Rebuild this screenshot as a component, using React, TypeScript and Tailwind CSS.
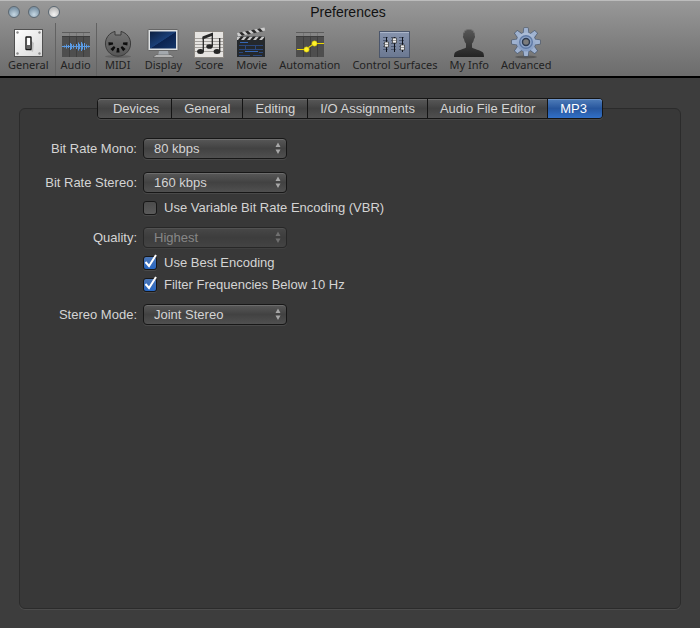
import { useState, type ReactNode } from "react"

function SwitchIcon() {
  return (
    <svg width="32" height="32" viewBox="0 0 32 32" aria-hidden="true">
      <defs>
        <linearGradient id="plate" x1="0" y1="0" x2="1" y2="1">
          <stop offset="0" stopColor="#fff" />
          <stop offset="1" stopColor="#d8d8d8" />
        </linearGradient>
      </defs>
      <rect x="2.5" y="2.5" width="28" height="27" fill="url(#plate)" stroke="#505050" />
      {[5.5, 27.5].map((x) => [5.5, 26.5].map((y) => <circle key={`${x}-${y}`} cx={x} cy={y} r="1.2" fill="#888" />))}
      <path d="M17 12 22 16 21 25 15 22z" fill="#aaa" opacity="0.6" />
      <rect x="14" y="10" width="5" height="12.5" rx="0.5" fill="#eee" stroke="#151515" strokeWidth="1.4" />
      <rect x="15.5" y="11" width="2.5" height="7" fill="#fff" />
      <rect x="15" y="18" width="3" height="4" fill="#666" />
    </svg>
  )
}

function TrackBackdrop() {
  return (
    <>
      <rect x="2" y="5" width="28" height="25" fill="#4e4e4e" />
      <path d="M9.5 10v20M16.5 10v20M23.5 10v20" stroke="#3e3e3e" />
      <rect x="2" y="5" width="28" height="4" fill="#868686" />
      <path d="M9.5 6v3M16.5 6v3M23.5 6v3" stroke="#757575" />
      <path d="M2 5.5h28" stroke="#5c5c5c" />
      <path d="M2 9.5h28" stroke="#3c3c3c" />
    </>
  )
}

function AudioIcon() {
  return (
    <svg width="32" height="32" viewBox="0 0 32 32" aria-hidden="true">
      <TrackBackdrop />
      <path
        d="M2 19.5h28M4.5 18.500v2M6.500 17.500v4M8.500 18v3M10.500 16v7M11.500 17v5M13.500 17.500v4M16.500 17v5M18.500 15.500v8M19.500 17v5M21.500 15v9M22.500 16.500v6M24.500 16v7M26.500 17.500v4M28.500 18.500v2"
        stroke="#5b9be4"
      />
    </svg>
  )
}

function MidiIcon() {
  return (
    <svg width="32" height="32" viewBox="0 0 32 32" aria-hidden="true">
      <defs>
        <linearGradient id="midi" x1="0" y1="0" x2="0" y2="1">
          <stop offset="0" stopColor="#747474" />
          <stop offset="1" stopColor="#565656" />
        </linearGradient>
      </defs>
      <ellipse cx="16" cy="29.5" rx="13" ry="1.5" fill="#444" opacity="0.4" />
      <path d="M13 4.400V8h6V4.400A12.600 12.600 0 1 1 13 4.400z" fill="url(#midi)" stroke="#3b3b3b" />
      <g fill="#0d0d0d">
        {[-85, -42, 0, 42, 85].map((angle) => (
          <path key={angle} d="M14.400 25.500h3.200l-.6-4.500h-2z" transform={`rotate(${angle} 16 16)`} />
        ))}
      </g>
    </svg>
  )
}

function DisplayIcon() {
  return (
    <svg width="32" height="32" viewBox="0 0 32 32" aria-hidden="true">
      <defs>
        <linearGradient id="screen" x1="0" y1="0" x2="1" y2="1">
          <stop offset="0" stopColor="#0c2041" />
          <stop offset="0.5" stopColor="#1a3f78" />
          <stop offset="0.52" stopColor="#0b2350" />
          <stop offset="1" stopColor="#153669" />
        </linearGradient>
      </defs>
      <path d="M12 24h9l1 5H11z" fill="#a3a8ad" />
      <path d="M9 28h15l3 2H6z" fill="#dadada" stroke="#555" strokeWidth="0.600" />
      <rect x="1" y="2.500" width="30" height="21" rx="0.500" fill="#dfe2e4" stroke="#666" />
      <rect x="3" y="4.500" width="26" height="17" fill="url(#screen)" />
    </svg>
  )
}

function ScoreIcon() {
  return (
    <svg width="32" height="32" viewBox="0 0 32 32" aria-hidden="true">
      <rect x="1.500" y="4.500" width="29" height="26" fill="#e6e4e1" stroke="#8c8883" />
      <path d="M2 11.500h28M2 14.500h28M2 17.500h28M2 20.500h28M2 24.500h28" stroke="#a3a09c" />
      <g fill="#262626">
        <ellipse cx="7.500" cy="24.500" rx="3.400" ry="2.500" />
        <ellipse cx="16.500" cy="19.500" rx="3.200" ry="2.300" />
        <ellipse cx="24" cy="24.500" rx="3.400" ry="2.500" />
        <path d="M9.500 9.500 20 5.500v3l-10.500 4z" />
      </g>
      <path d="M10.300 24.500V10M19.300 19.500V6M26.700 24.500V11" stroke="#262626" strokeWidth="1.300" />
    </svg>
  )
}

function MovieIcon() {
  return (
    <svg width="32" height="32" viewBox="0 0 32 32" aria-hidden="true">
      <rect x="1" y="9" width="28" height="21" fill="#24282c" />
      <path d="M1 9.500h28V13H1z" fill="#c8c8c8" />
      <path d="M2 13l3-3.500h3L5 13zM8 13l3-3.500h3L11 13zM14 13l3-3.500h3L17 13zM20 13l3-3.500h3L23 13zM26 13l3-3.500V13z" fill="#222" />
      <path d="M1 6 28.500.5l.7 3L2 9.500z" fill="#ccc" />
      <path d="M3 5.600l3 3.100 3-.7-3-3.100zM9 4.400l3 3.100 3-.7-3-3.100zM15 3.200l3 3.100 3-.7-3-3.100zM21 2l3 3.100 3-.7-3-3.100z" fill="#2a2a2a" />
      <path d="M3 18.500h24M9.500 19v3M19.500 19v3M3 22.500h24M3 25.500h4M23 25.500h4M3 28.500h11M17 28.500h9" stroke="#2a477c" />
      <path d="M4 15.500h8M9 24.500h13" stroke="#3566b5" />
    </svg>
  )
}

function AutomationIcon() {
  return (
    <svg width="32" height="32" viewBox="0 0 32 32" aria-hidden="true">
      <TrackBackdrop />
      <path d="M3 22.500h9l8-6h10" fill="none" stroke="#ecd900" strokeWidth="1.200" />
      <circle cx="12.500" cy="22.500" r="2.700" fill="#fff22c" stroke="#a89800" strokeWidth="0.500" />
      <circle cx="20.500" cy="16.500" r="2.700" fill="#fff22c" stroke="#a89800" strokeWidth="0.500" />
    </svg>
  )
}

function SurfacesIcon() {
  return (
    <svg width="32" height="32" viewBox="0 0 32 32" aria-hidden="true">
      <defs>
        <linearGradient id="desk" x1="0" y1="0" x2="0" y2="1">
          <stop offset="0" stopColor="#8794ae" />
          <stop offset="1" stopColor="#6b7891" />
        </linearGradient>
      </defs>
      <rect x="0.500" y="4.500" width="30" height="26" fill="url(#desk)" stroke="#4b566b" />
      <path d="M1 5.500h29" stroke="#aab5c9" />
      <g stroke="#4c5870" strokeWidth="5" strokeDasharray="1 2">
        <path d="M6.500 10v15M14.500 10v15M22.500 10v15" />
      </g>
      <path d="M7.500 10v15M15.500 10v15M23.500 10v15" stroke="#10141c" />
      <g fill="#eee" stroke="#333" strokeWidth="0.700">
        <path d="M5.500 15h4v5h-4zM13.500 11h4v5h-4zM21.500 18h4v5h-4z" />
      </g>
      <path d="M6 17.500h3M14 13.500h3M22 20.500h3" stroke="#999" />
    </svg>
  )
}

function PersonIcon() {
  return (
    <svg width="32" height="32" viewBox="0 0 32 32" aria-hidden="true">
      <defs>
        <linearGradient id="person" x1="0" y1="0" x2="0" y2="1">
          <stop offset="0" stopColor="#585858" />
          <stop offset="1" stopColor="#242424" />
        </linearGradient>
      </defs>
      <path
        d="M16 2c-4 0-6 2.500-5.700 6.500-.8.500-.2 3 .7 3.500.3 2 1 3.500 2 4.500v4c-1 1.500-9 2.500-11 5-.7 1-1 2.500-1 4.500h30c0-2-.3-3.500-1-4.500-2-2.500-10-3.500-11-5v-4c1-1 1.700-2.500 2-4.500.9-.5 1.500-3 .7-3.500C22 4.500 20 2 16 2z"
        fill="url(#person)"
      />
      <path d="M11 6c1-5 9-5 10 0" fill="none" stroke="#8a8a8a" strokeWidth="0.600" />
    </svg>
  )
}

const teeth = [0, 45, 90, 135, 180, 225, 270, 315].map((angle) => (
  <path key={angle} d="M13.300 7l.9-6h3.600l.9 6z" transform={`rotate(${angle} 16 15)`} />
))

function GearIcon() {
  return (
    <svg width="32" height="32" viewBox="0 0 32 32" aria-hidden="true">
      <defs>
        <linearGradient id="gear" x1="0" y1="5" x2="0" y2="25" gradientUnits="userSpaceOnUse">
          <stop offset="0" stopColor="#b0c0d9" />
          <stop offset="1" stopColor="#8199c0" />
        </linearGradient>
      </defs>
      <ellipse cx="16" cy="30" rx="11" ry="1.500" fill="#333" opacity="0.450" />
      <g fill="#4b5b73" stroke="#4b5b73" strokeWidth="1.200">
        {teeth}
        <circle cx="16" cy="15" r="9.500" />
      </g>
      <g fill="#9fb2d0">{teeth}</g>
      <circle cx="16" cy="15" r="9.500" fill="url(#gear)" />
      <circle cx="16" cy="15" r="6.300" fill="#8ea4c8" stroke="#5f7aa6" strokeWidth="1.400" />
      <circle cx="16" cy="15" r="3.500" fill="#7c7c7c" stroke="#2c3a50" strokeWidth="1.400" />
    </svg>
  )
}

const toolbar: { name: string; icon: ReactNode }[] = [
  { name: "General", icon: <SwitchIcon /> },
  { name: "Audio", icon: <AudioIcon /> },
  { name: "MIDI", icon: <MidiIcon /> },
  { name: "Display", icon: <DisplayIcon /> },
  { name: "Score", icon: <ScoreIcon /> },
  { name: "Movie", icon: <MovieIcon /> },
  { name: "Automation", icon: <AutomationIcon /> },
  { name: "Control Surfaces", icon: <SurfacesIcon /> },
  { name: "My Info", icon: <PersonIcon /> },
  { name: "Advanced", icon: <GearIcon /> },
]

const tabs = ["Devices", "General", "Editing", "I/O Assignments", "Audio File Editor", "MP3"]

const windowButtons = [
  { name: "Close", color: "bg-[radial-gradient(circle_at_50%_75%,#c6d8e4,#7f96a8_70%)]" },
  { name: "Minimize", color: "bg-[radial-gradient(circle_at_50%_75%,#c6d8e4,#7f96a8_70%)]" },
  { name: "Zoom", color: "bg-[radial-gradient(circle_at_50%_75%,#f4f4f4,#bdbdbd_70%)]" },
]

interface SelectRowProps {
  id: string
  label: string
  options: string[]
  disabled?: boolean
}

function SelectRow({ id, label, options, disabled }: SelectRowProps) {
  return (
    <div className="grid grid-cols-[117px_1fr] items-center gap-x-1.5">
      <label htmlFor={id} className="text-right whitespace-nowrap">
        {label}
      </label>
      <div className={`relative w-36 ${disabled ? "opacity-50" : ""}`}>
        <select
          id={id}
          disabled={disabled}
          className="block h-[21px] w-full appearance-none rounded-[4px] border border-[#171717] bg-linear-to-b from-[#585858] via-[#424242] to-[#505050] pr-6 pl-2.5 shadow-[inset_0_1px_0_#6c6c6c,0_1px_0_#494949]"
        >
          {options.map((option) => (
            <option key={option}>{option}</option>
          ))}
        </select>
        <svg width="6" height="12" viewBox="0 0 6 12" className="pointer-events-none absolute top-1 right-1.5" aria-hidden="true">
          <path d="M3 .5 5.500 5h-5zM3 12 .5 7.500h5z" fill="#a8a8a8" />
        </svg>
      </div>
    </div>
  )
}

function CheckRow({ label, initial }: { label: string; initial: boolean }) {
  const [checked, setChecked] = useState(initial)
  return (
    <div className="grid grid-cols-[117px_1fr] gap-x-1.5">
      <label className="col-start-2 flex h-5 items-center gap-[7px]">
        <span className="relative block">
          <input
            type="checkbox"
            checked={checked}
            onChange={(e) => setChecked(e.target.checked)}
            className="block size-3.5 appearance-none rounded-[3px] border border-[#171717] bg-linear-to-b from-[#4c4c4c] to-[#5a5a5a] shadow-[0_1px_0_#494949] checked:from-[#4a75b5] checked:to-[#2767c2]"
          />
          {checked && (
            <svg width="16" height="16" viewBox="0 0 16 16" className="pointer-events-none absolute -top-0.5 left-0" aria-hidden="true">
              <path d="M2.500 8 6 12 13 1" fill="none" stroke="#fff" strokeWidth="2" />
            </svg>
          )}
        </span>
        <span>{label}</span>
      </label>
    </div>
  )
}

export default function App() {
  const [section, setSection] = useState("Audio")
  const [tab, setTab] = useState("MP3")

  return (
    <div className="flex min-h-screen flex-col bg-[#3d3d3d] font-['Liberation_Sans',sans-serif] text-[13px] leading-4 text-[#d4d4d4]">
      <header className="border-b-2 border-black bg-linear-to-b from-[#999] to-[#6c6c6c] shadow-[inset_0_1px_0_#bcbcbc]">
        <div className="grid h-[23px] grid-cols-[1fr_auto_1fr] items-center pr-3 pl-2">
          <div className="flex gap-2">
            {windowButtons.map((button) => (
              <button key={button.name} aria-label={button.name} className={`size-3 rounded-full border border-[#5c6872] ${button.color}`} />
            ))}
          </div>
          <h1 className="text-sm font-medium text-[#111]">Preferences</h1>
        </div>
        <nav className="flex pl-0.5">
          {toolbar.map(({ name, icon }) => (
            <button
              key={name}
              onClick={() => setSection(name)}
              className={`flex h-[53px] flex-col items-center border-x px-1 pt-1 font-['Noto_Sans',sans-serif] text-[11px] leading-3 whitespace-nowrap text-[#222] ${
                section === name ? "border-[#626262]" : "border-transparent"
              }`}
            >
              {icon}
              <span className="px-px">{name}</span>
            </button>
          ))}
        </nav>
      </header>

      <main className="flex flex-1 flex-col px-[19px] pt-5 pb-[19px]">
        <div role="tablist" className="z-10 flex justify-center">
          <div className="flex rounded-[4px] border border-[#141414] shadow-[0_1px_0_#494949]">
            {tabs.map((name) => (
              <button
                key={name}
                role="tab"
                aria-selected={tab === name}
                onClick={() => setTab(name)}
                className={`h-[19px] border-r border-[#141414] px-3 first:rounded-l-[3px] first:pl-[15px] last:rounded-r-[3px] last:border-r-0 last:pr-[15px] ${
                  tab === name
                    ? "bg-linear-to-b from-[#4f7db9] via-[#27569d] to-[#3170c8] text-white shadow-[inset_0_1px_0_#6c92c6]"
                    : "bg-linear-to-b from-[#585858] via-[#424242] to-[#505050] shadow-[inset_0_1px_0_#6c6c6c]"
                }`}
              >
                {name}
              </button>
            ))}
          </div>
        </div>

        <section className="-mt-[11px] flex flex-1 flex-col rounded-md border border-[#2b2b2b] bg-[#383838] pt-[29px] shadow-[0_1px_0_#4c4c4c]">
          <div className="flex flex-col gap-[13px]">
            <SelectRow id="mono" label="Bit Rate Mono:" options={["80 kbps", "96 kbps", "128 kbps"]} />
            <SelectRow id="stereo" label="Bit Rate Stereo:" options={["160 kbps", "192 kbps", "256 kbps"]} />
          </div>
          <div className="py-[5px]">
            <CheckRow label="Use Variable Bit Rate Encoding (VBR)" initial={false} />
          </div>
          <div className="pt-1">
            <SelectRow id="quality" label="Quality:" options={["Highest"]} disabled />
          </div>
          <div className="flex flex-col gap-0.5 pt-[5px] pb-[9px]">
            <CheckRow label="Use Best Encoding" initial />
            <CheckRow label="Filter Frequencies Below 10 Hz" initial />
          </div>
          <SelectRow id="mode" label="Stereo Mode:" options={["Joint Stereo", "Normal"]} />
        </section>
      </main>
    </div>
  )
}
